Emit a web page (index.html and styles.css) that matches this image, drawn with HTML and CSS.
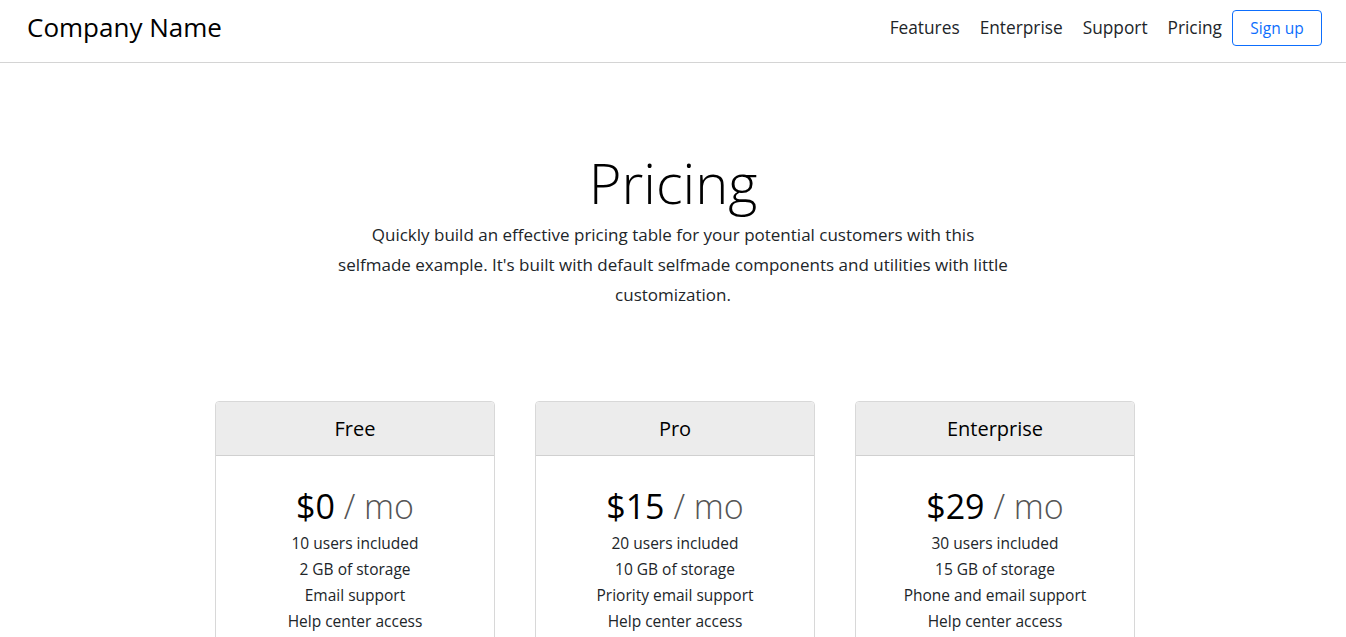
FILE: index.html
```html
<!DOCTYPE html>
<html lang="en">
<head>
<meta charset="utf-8">
<title>Pricing</title>
<link rel="stylesheet" href="styles.css">
</head>
<body>
<header class="navbar">
  <div class="brand">Company Name</div>
  <nav class="nav">
    <a class="nav-link" href="#">Features</a>
    <a class="nav-link" href="#">Enterprise</a>
    <a class="nav-link" href="#">Support</a>
    <a class="nav-link" href="#">Pricing</a>
    <a class="btn-outline" href="#">Sign up</a>
  </nav>
</header>
<section class="hero">
  <h1 class="hero-title">Pricing</h1>
  <p class="lead">Quickly build an effective pricing table for your potential customers with this<br>selfmade example. It's built with default selfmade components and utilities with little customization.</p>
</section>
<section class="cards">
  <div class="card">
    <div class="card-header">Free</div>
    <div class="card-body">
      <div class="price">$0 <small>/ mo</small></div>
      <ul class="features">
        <li>10 users included</li>
        <li>2 GB of storage</li>
        <li>Email support</li>
        <li>Help center access</li>
      </ul>
    </div>
  </div>
  <div class="card">
    <div class="card-header">Pro</div>
    <div class="card-body">
      <div class="price">$15 <small>/ mo</small></div>
      <ul class="features">
        <li>20 users included</li>
        <li>10 GB of storage</li>
        <li>Priority email support</li>
        <li>Help center access</li>
      </ul>
    </div>
  </div>
  <div class="card">
    <div class="card-header">Enterprise</div>
    <div class="card-body">
      <div class="price">$29 <small>/ mo</small></div>
      <ul class="features">
        <li>30 users included</li>
        <li>15 GB of storage</li>
        <li>Phone and email support</li>
        <li>Help center access</li>
      </ul>
    </div>
  </div>
</section>
</body>
</html>
```
FILE: styles.css
```css
* { box-sizing: border-box; }
body {
  margin: 0;
  font-family: "Open Sans", "DejaVu Sans", sans-serif;
  color: #212529;
  background: #fff;
}
.navbar {
  height: 63px;
  display: flex;
  align-items: flex-start;
  justify-content: space-between;
  padding: 9px 24px 0 27px;
  border-bottom: 1px solid #d4d4d4;
}
.brand {
  font-size: 26px;
  line-height: 36px;
  color: #000;
}
.nav {
  display: flex;
  align-items: center;
  height: 37px;
}
.nav-link {
  font-size: 17.3px;
  color: #212529;
  text-decoration: none;
  margin-right: 20px;
}
.nav-link:nth-child(4) { margin-right: 10px; }
.btn-outline {
  display: inline-flex;
  align-items: center;
  justify-content: center;
  width: 90px;
  height: 36px;
  border: 1px solid #0d6efd;
  border-radius: 4px;
  color: #0d6efd;
  text-decoration: none;
  font-size: 15.5px;
}
.hero {
  text-align: center;
  padding-top: 86px;
}
.hero-title {
  margin: 0;
  font-size: 56px;
  font-weight: 300;
  line-height: 1.2;
  color: #000;
}
.lead {
  max-width: 700px;
  margin: 4px auto 0;
  font-size: 17px;
  line-height: 30px;
  color: #212529;
}
.cards {
  display: flex;
  justify-content: center;
  gap: 40px;
  margin-top: 91px;
  padding-left: 4px;
}
.card {
  width: 280px;
  min-height: 300px;
  border: 1px solid #d8d8d8;
  border-radius: 4px;
  margin-bottom: 24px;
}
.card-header {
  height: 54px;
  background: #ececec;
  border-bottom: 1px solid #d0d0d0;
  display: flex;
  align-items: center;
  justify-content: center;
  font-size: 20px;
  color: #000;
  border-radius: 4px 4px 0 0;
}
.card-body {
  text-align: center;
  padding: 26px 20px 20px;
}
.price {
  font-size: 34px;
  line-height: 48px;
  color: #000;
}
.price small {
  font-size: 34px;
  font-weight: 300;
  color: #555;
}
.features {
  list-style: none;
  margin: 0;
  padding: 0;
  font-size: 15.5px;
  line-height: 26px;
  color: #212529;
}
```
